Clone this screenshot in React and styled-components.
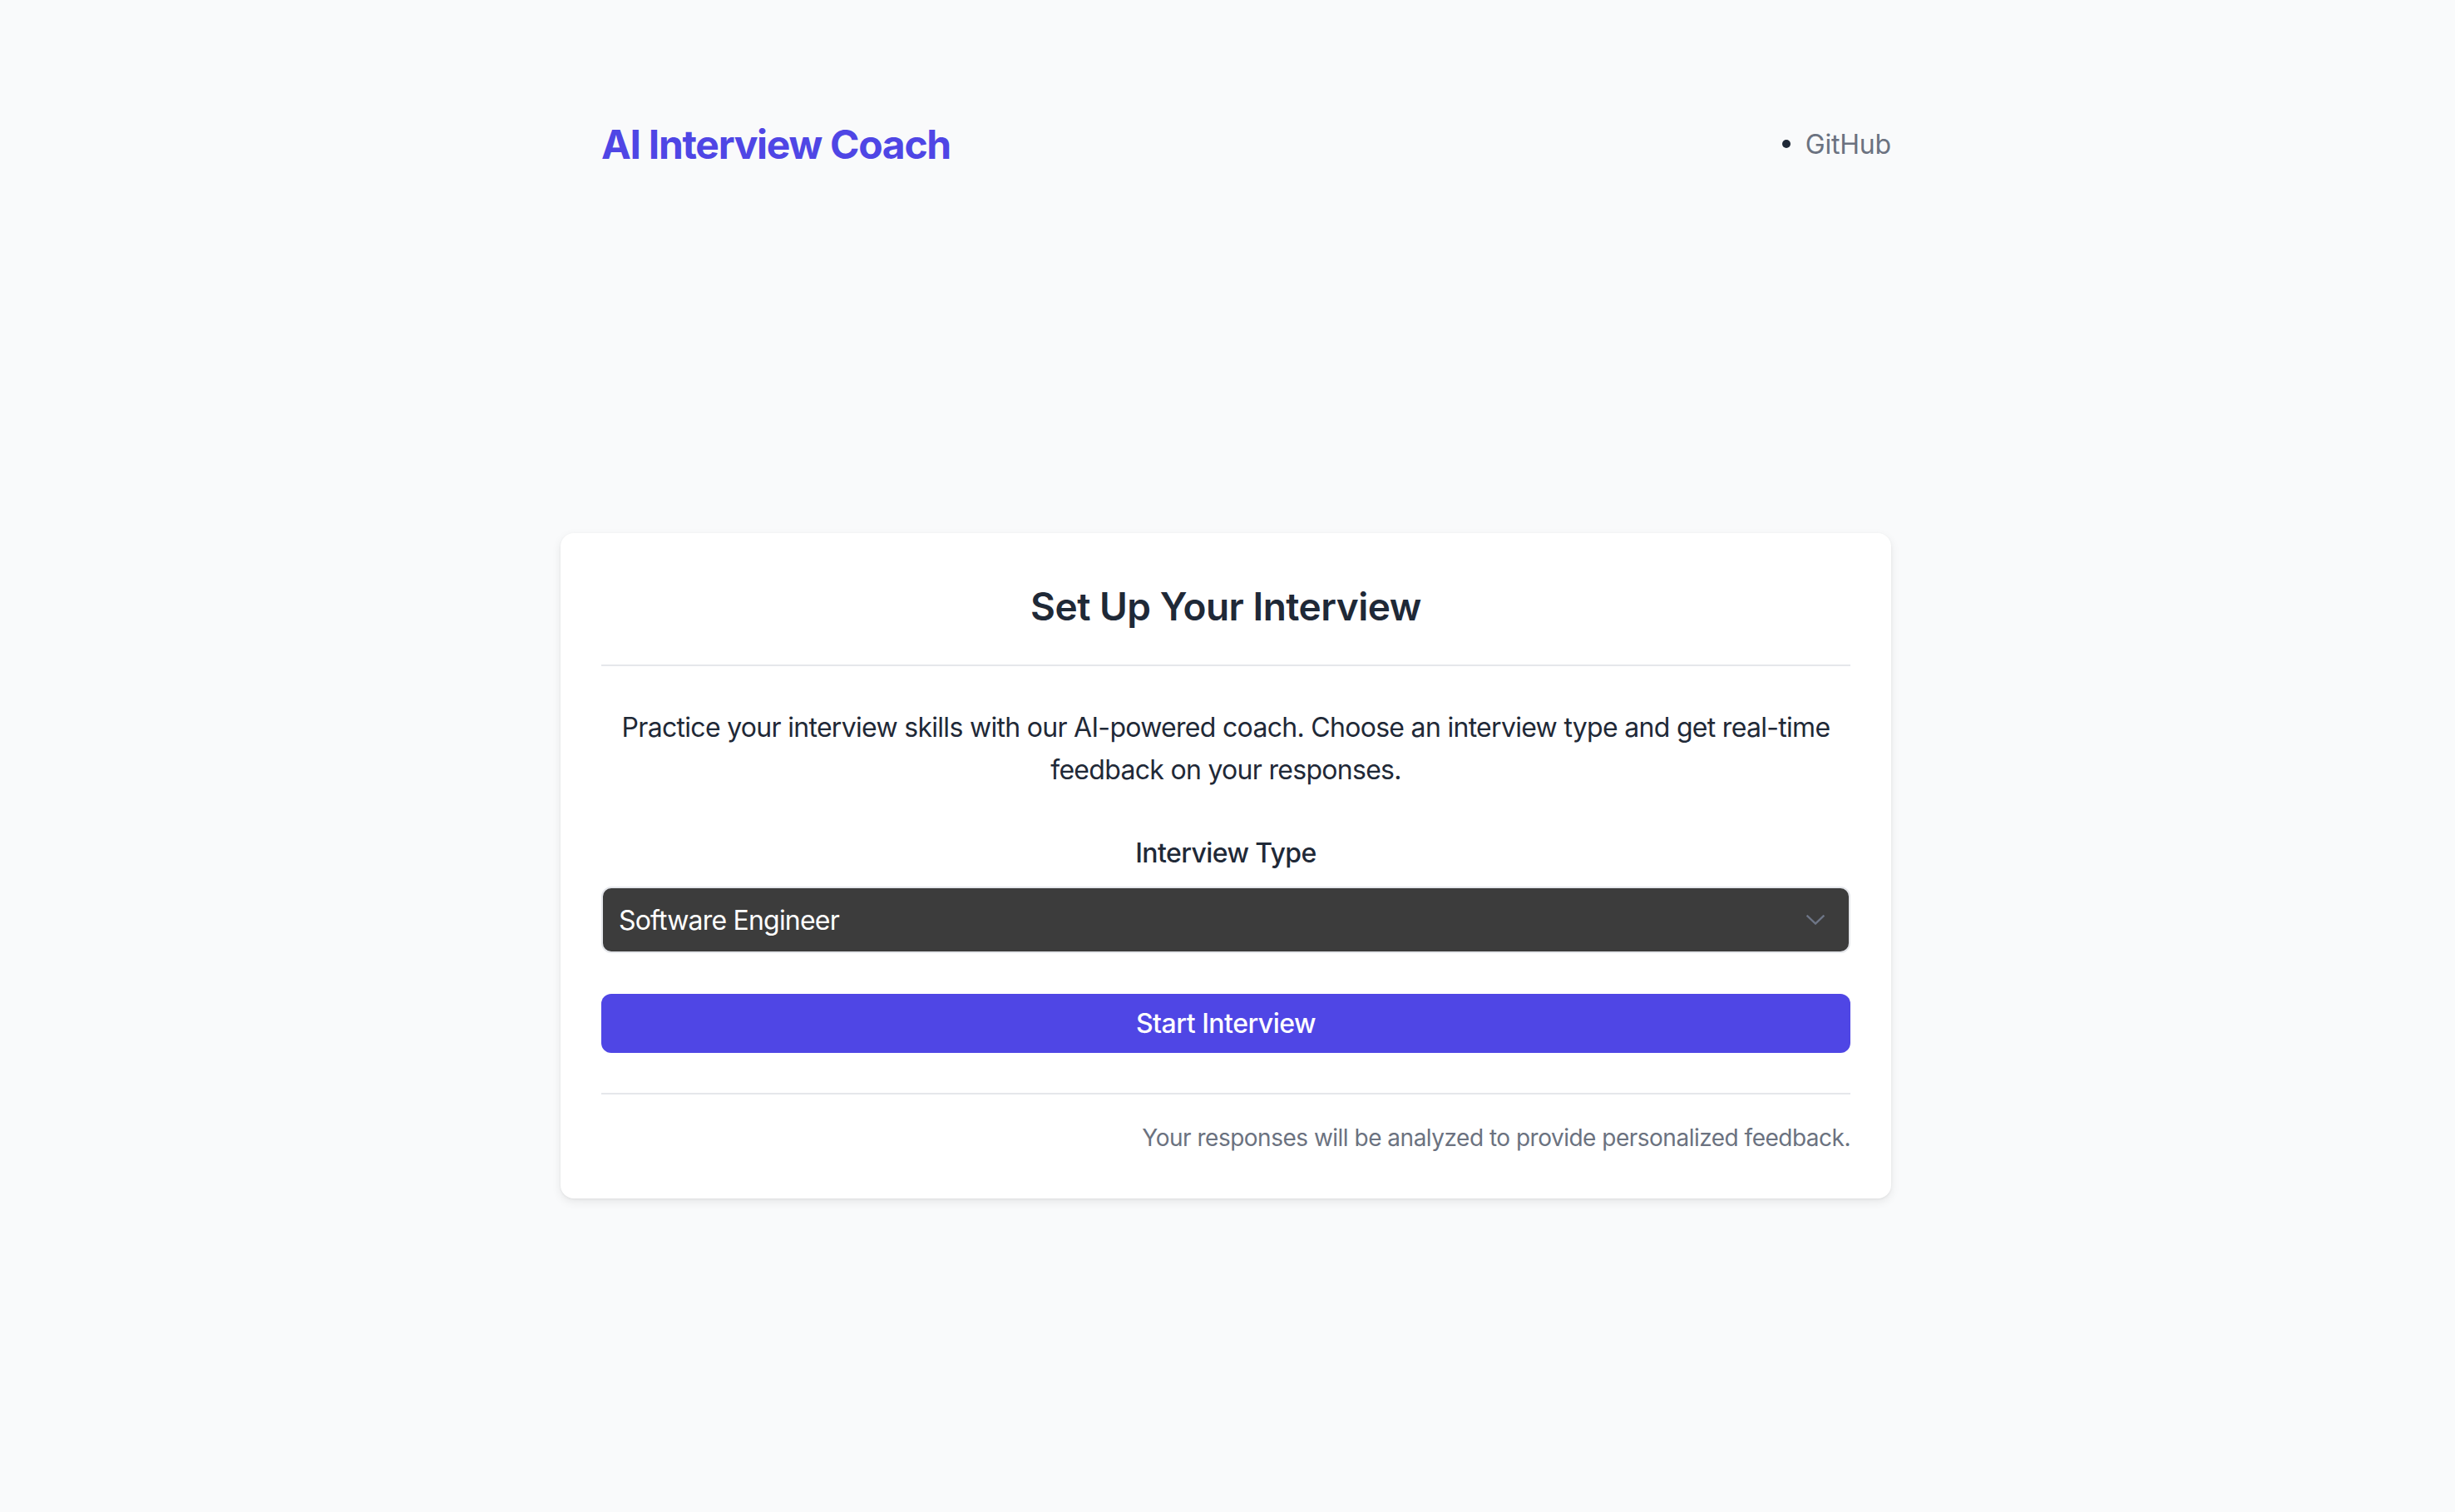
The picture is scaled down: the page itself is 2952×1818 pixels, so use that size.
import React, { useState } from "react";
import styled, { createGlobalStyle } from "styled-components";

const GlobalStyle = createGlobalStyle`
  html, body {
    margin: 0;
    padding: 0;
    background: #f9fafb;
    font-family: "Inter", "Liberation Sans", sans-serif;
    color: #1f2937;
  }
`;

const Page = styled.div`
  min-height: 100vh;
  background: #f9fafb;
`;

const Container = styled.div`
  width: 1600px;
  margin-left: calc(50% - 802px);
`;

const Header = styled.header`
  display: flex;
  align-items: center;
  justify-content: space-between;
  padding: 142px 0 0 49px;
  height: 64px;
`;

const Logo = styled.h1`
  margin: 0;
  font-size: 48px;
  line-height: 64px;
  font-weight: 700;
  color: #4f46e5;
  letter-spacing: -1.3px;
`;

const NavList = styled.ul`
  display: flex;
  margin: 0;
  padding: 0;
  list-style: none;
`;

const NavItem = styled.li`
  display: flex;
  align-items: center;
  gap: 18px;
  font-size: 32px;
  color: #6b7280;
  letter-spacing: -0.2px;
  margin-top: -2px;

  &::before {
    content: "";
    width: 10px;
    height: 10px;
    border-radius: 50%;
    background: #1f2937;
  }
`;

const Main = styled.main`
  padding-top: 435px;
  padding-bottom: 200px;
`;

const Card = styled.section`
  background: #ffffff;
  border-radius: 16px;
  padding: 48px 49px 51px;
  box-shadow: 0 4px 12px rgba(0, 0, 0, 0.08), 0 1px 3px rgba(0, 0, 0, 0.06);
`;

const CardHeader = styled.div`
  padding-bottom: 30px;
  border-bottom: 2px solid #e5e7eb;
  text-align: center;
`;

const CardTitle = styled.h2`
  margin: 0;
  font-size: 46px;
  line-height: 80px;
  font-weight: 600;
  color: #1f2937;
  letter-spacing: -0.5px;
`;

const Intro = styled.p`
  margin: 48px 0 0;
  font-size: 32px;
  line-height: 51px;
  text-align: center;
  color: #1f2937;
  letter-spacing: -0.7px;
`;

const FormGroup = styled.div`
  margin-top: 51px;
  display: flex;
  flex-direction: column;
  gap: 16px;
`;

const Label = styled.label`
  font-size: 32px;
  line-height: 48px;
  font-weight: 500;
  text-align: center;
  color: #1f2937;
  letter-spacing: -0.6px;
`;

const SelectWrap = styled.div`
  position: relative;
`;

const Select = styled.select`
  width: 100%;
  height: 80px;
  appearance: none;
  -webkit-appearance: none;
  background: #3c3c3c;
  color: #ffffff;
  border: 2px solid #e5e7eb;
  border-radius: 12px;
  padding: 0 19px;
  font-family: "Inter", "Liberation Sans", sans-serif;
  font-size: 32px;
  letter-spacing: -0.8px;
  outline: none;
`;

const Chevron = styled.svg`
  position: absolute;
  right: 31px;
  top: 50%;
  width: 22px;
  height: 12px;
  transform: translateY(-50%);
  pointer-events: none;
`;

const StartButton = styled.button`
  margin-top: 49px;
  width: 100%;
  height: 71px;
  border: none;
  border-radius: 12px;
  background: #4f46e5;
  color: #ffffff;
  font-family: "Inter", "Liberation Sans", sans-serif;
  font-size: 32px;
  font-weight: 500;
  letter-spacing: -0.5px;
  cursor: pointer;
`;

const CardFooter = styled.div`
  margin-top: 48px;
  padding-top: 32px;
  padding-bottom: 2px;
  border-top: 2px solid #e5e7eb;
  text-align: right;
  font-size: 28px;
  line-height: 40px;
  color: #6b7280;
  letter-spacing: -0.5px;
`;

export default function App() {
  const [type, setType] = useState("software");

  return (
    <Page>
      <GlobalStyle />
      <Container>
        <Header>
          <Logo>AI Interview Coach</Logo>
          <NavList>
            <NavItem>GitHub</NavItem>
          </NavList>
        </Header>
        <Main>
          <Card>
            <CardHeader>
              <CardTitle>Set Up Your Interview</CardTitle>
            </CardHeader>
            <Intro>
              Practice your interview skills with our AI-powered coach. Choose an interview type and get
              real-time feedback on your responses.
            </Intro>
            <FormGroup>
              <Label htmlFor="interview-type">Interview Type</Label>
              <SelectWrap>
                <Select id="interview-type" value={type} onChange={(e) => setType(e.target.value)}>
                  <option value="software">Software Engineer</option>
                  <option value="product">Product Manager</option>
                  <option value="data">Data Scientist</option>
                </Select>
                <Chevron viewBox="0 0 22 12" fill="none" stroke="#6e7687" strokeWidth="2.4" strokeLinecap="square">
                  <path d="M1.5 1.5L11 10.5L20.5 1.5" />
                </Chevron>
              </SelectWrap>
            </FormGroup>
            <StartButton>Start Interview</StartButton>
            <CardFooter>Your responses will be analyzed to provide personalized feedback.</CardFooter>
          </Card>
        </Main>
      </Container>
    </Page>
  );
}
